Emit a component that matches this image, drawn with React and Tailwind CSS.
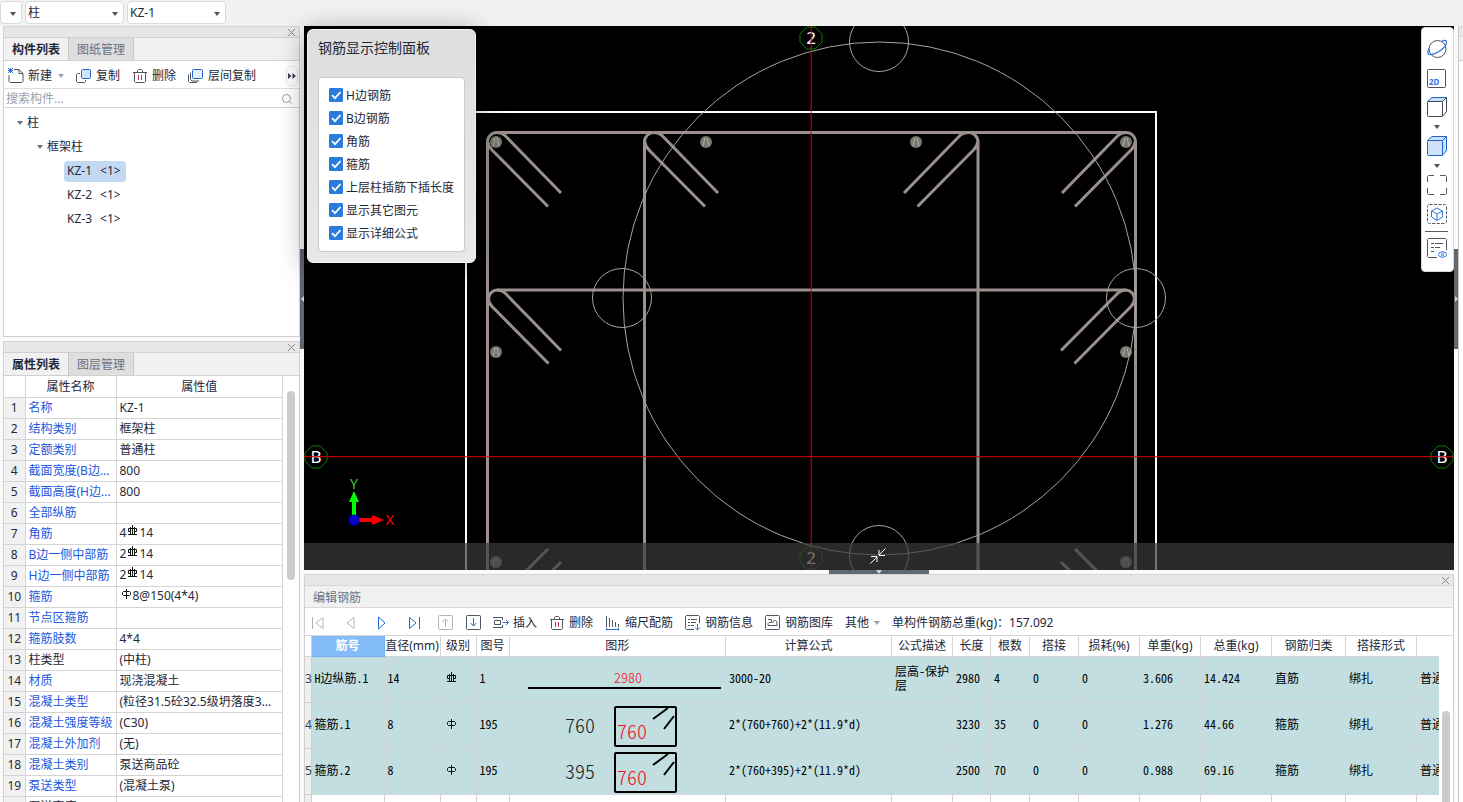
import { useState } from 'react';

const properties = [
  { name: '名称', value: 'KZ-1' },
  { name: '结构类别', value: '框架柱' },
  { name: '定额类别', value: '普通柱' },
  { name: '截面宽度(B边...', value: '800' },
  { name: '截面高度(H边...', value: '800' },
  { name: '全部纵筋', value: '' },
  { name: '角筋', value: '14', count: '4', grade: 3 },
  { name: 'B边一侧中部筋', value: '14', count: '2', grade: 3 },
  { name: 'H边一侧中部筋', value: '14', count: '2', grade: 3 },
  { name: '箍筋', value: '8@150(4*4)', count: '', grade: 1 },
  { name: '节点区箍筋', value: '' },
  { name: '箍筋肢数', value: '4*4' },
  { name: '柱类型', value: '(中柱)', plain: true },
  { name: '材质', value: '现浇混凝土' },
  { name: '混凝土类型', value: '(粒径31.5砼32.5级坍落度3...' },
  { name: '混凝土强度等级', value: '(C30)' },
  { name: '混凝土外加剂', value: '(无)' },
  { name: '混凝土类别', value: '泵送商品砼' },
  { name: '泵送类型', value: '(混凝土泵)' },
  { name: '泵送高度(m)', value: '', plain: true },
];

const displayOptions = ['H边钢筋', 'B边钢筋', '角筋', '箍筋', '上层柱插筋下插长度', '显示其它图元', '显示详细公式'];

const columns = [
  { title: '筋号', width: 'w-[73px]' },
  { title: '直径(mm)', width: 'w-[56px]' },
  { title: '级别', width: 'w-[36px]' },
  { title: '图号', width: 'w-[33px]' },
  { title: '图形', width: '' },
  { title: '计算公式', width: 'w-[166px]' },
  { title: '公式描述', width: 'w-[61px]' },
  { title: '长度', width: 'w-[38px]' },
  { title: '根数', width: 'w-[39px]' },
  { title: '搭接', width: 'w-[49px]' },
  { title: '损耗(%)', width: 'w-[61px]' },
  { title: '单重(kg)', width: 'w-[61px]' },
  { title: '总重(kg)', width: 'w-[71px]' },
  { title: '钢筋归类', width: 'w-[74px]' },
  { title: '搭接形式', width: 'w-[71px]' },
  { title: '', width: 'w-[71px]' },
];

const bars = [
  { no: 3, name: 'H边纵筋.1', dia: 14, grade: 3, fig: 1, shape: ['2980'], formula: '3000-20', note: '层高-保护层', rest: ['2980', '4', '0', '0', '3.606', '14.424', '直筋', '绑扎', '普通钢筋'] },
  { no: 4, name: '箍筋.1', dia: 8, grade: 1, fig: 195, shape: ['760', '760'], formula: '2*(760+760)+2*(11.9*d)', note: '', rest: ['3230', '35', '0', '0', '1.276', '44.66', '箍筋', '绑扎', '普通钢筋'] },
  { no: 5, name: '箍筋.2', dia: 8, grade: 1, fig: 195, shape: ['395', '760'], formula: '2*(760+395)+2*(11.9*d)', note: '', rest: ['2500', '70', '0', '0', '0.988', '69.16', '箍筋', '绑扎', '普通钢筋'] },
];

function Svg({ size = 16, className = '', children }) {
  return (
    <svg width={size} height={size} viewBox={`0 0 ${size} ${size}`} fill="none" stroke="#4b5563" className={`shrink-0 ${className}`} aria-hidden="true">
      {children}
    </svg>
  );
}

function Caret({ className = 'fill-gray-600' }) {
  return (
    <svg width="6" height="4" viewBox="0 0 6 4" className={`shrink-0 ${className}`} aria-hidden="true">
      <path d="M0 0h6L3 4z" />
    </svg>
  );
}

// Rebar grade marks: 1 = HPB300, 3 = HRB400
function Grade({ grade, className = '' }) {
  return (
    <svg width="11" height="11" viewBox="0 0 11 11" fill="none" stroke="#111" className={className} role="img" aria-label={grade === 3 ? 'HRB400' : 'HPB300'}>
      {grade === 3 ? (
        <path d="M3.500 6.500H1.500v-3h8v3H7.500M5.500 0v9M3.500 2v7M7.500 2v7M1 9.500h9" />
      ) : (
        <path d="M2.500 3.500h6l1 1v2l-1 1h-6l-1-1v-2zM5.500 1v10" />
      )}
    </svg>
  );
}

const TrashIcon = () => (
  <Svg>
    <path d="M1 4.500h14M5.500 4V2.500l1-1h3l1 1V4M2.500 5v8.500l1 1h9l1-1V5" />
    <path d="M6.500 7v5M9.500 7v5" stroke="#c0304a" />
  </Svg>
);

const NewIcon = () => (
  <Svg>
    <path d="M6 1.500h5l4 4v8l-1 1H2l-1-1V7M11 1.500v4h4" />
    <path d="M0 0l5 5M5 0L0 5M2.500 0v5M0 2.500h5" stroke="#2f6fe0" />
  </Svg>
);

const CopyIcon = () => (
  <Svg>
    <path d="M4 5.500H1.500l-1 1v7l1 1h7l1-1V12" />
    <rect x="5.500" y="1.500" width="9" height="9" rx="1" fill="#cfe3fb" stroke="#2467d1" />
  </Svg>
);

const LayerCopyIcon = () => (
  <Svg>
    <path d="M2.500 4.500v7l1.500 1.500h7M.5 6.500v7l1 1H9" />
    <rect x="4.500" y="1.500" width="10" height="9" rx="1" fill="#e3f0fd" stroke="#2467d1" />
  </Svg>
);

const InsertIcon = () => (
  <Svg>
    <path d="M0 2.500h9.500V5M0 12.500h9.500V10M1.500 5.500h6v4h-6z" />
    <path d="M9.500 7.500h6M13 5l2.500 2.500L13 10" stroke="#2f6fe0" />
  </Svg>
);

const ScaleIcon = () => (
  <Svg>
    <path d="M1.500 1v11M4.500 3v9M7.500 5v7M10.500 7v5M13.500 9v3" />
    <path d="M1 14.500h13M1.500 13v2.500M13.500 13v2.500" stroke="#2f6fe0" />
  </Svg>
);

const InfoIcon = () => (
  <Svg>
    <path d="M9 14.500H1.500l-1-1v-12l1-1h12l1 1V8M3 4.500h2M6 4.500h6M3 7.500h2M6 7.500h5M3 10.500h2M6 10.500h3" />
    <path d="M12.500 9v6M10 12.500l2.500 2.500 2.500-2.500" stroke="#2f6fe0" />
  </Svg>
);

const LibraryIcon = () => (
  <Svg>
    <rect x=".5" y=".5" width="14" height="14" rx="1" />
    <path d="M3 4.500h3.500v3H4L3 8.500v2h9V7l-1.500-1.500H9l-1 1v1.500" />
  </Svg>
);

function ToolButton({ icon, children }) {
  return (
    <button type="button" className="flex shrink-0 items-center gap-1 whitespace-nowrap">
      {icon}
      {children}
    </button>
  );
}

function CloseButton() {
  return (
    <button type="button" aria-label="关闭" className="flex h-full w-4 items-center justify-center">
      <svg width="7" height="7" viewBox="0 0 7 7" stroke="#8a8a8a" aria-hidden="true">
        <path d="M0 0l7 7M7 0L0 7" />
      </svg>
    </button>
  );
}

function PanelStrip() {
  return (
    <div className="flex h-[11px] shrink-0 justify-end border-t border-[#d6d6d6] bg-[#e7e7e7]">
      <CloseButton />
    </div>
  );
}

function Tabs({ items }) {
  const [active, setActive] = useState(0);
  return (
    <div role="tablist" className="flex h-6 shrink-0 border-y border-[#d0d0d0] bg-[#f1f1f1]">
      {items.map((item, i) => (
        <button
          key={item}
          type="button"
          role="tab"
          aria-selected={i === active}
          onClick={() => setActive(i)}
          className={
            i === active
              ? 'border-r border-[#c8c8c8] px-2 pt-[2px] font-bold text-gray-800'
              : 'border-r border-[#c8c8c8] bg-[#dedede] px-2 pt-[2px] text-gray-500'
          }
        >
          {item}
        </button>
      ))}
    </div>
  );
}

function TopSelect({ label, value, className }) {
  return (
    <div className={`relative ${className}`}>
      <select aria-label={label} defaultValue={value} className="h-[23px] w-full appearance-none rounded-sm border border-[#dadada] bg-white px-[2px] text-xs text-gray-800">
        <option>{value}</option>
      </select>
      <span className="pointer-events-none absolute inset-y-0 right-[6px] flex items-center">
        <Caret />
      </span>
    </div>
  );
}

function TopBar() {
  return (
    <header className="flex h-[26px] shrink-0 gap-[3px] bg-[#f1f1f1] pt-px">
      <TopSelect label="楼层" value="" className="w-[22px]" />
      <TopSelect label="构件类型" value="柱" className="w-[99px]" />
      <TopSelect label="构件" value="KZ-1" className="w-[99px]" />
    </header>
  );
}

function ComponentPanel() {
  const [selected, setSelected] = useState('KZ-1');
  return (
    <section className="flex h-[311px] shrink-0 flex-col border-x border-b border-[#d0d0d0] bg-white">
      <PanelStrip />
      <Tabs items={['构件列表', '图纸管理']} />
      <div className="flex h-7 shrink-0 items-center gap-3 border-b border-[#dcdcdc] pt-[2px] pl-1">
        <button type="button" className="flex items-center gap-1">
          <NewIcon />
          新建
          <Caret className="ml-[2px] fill-gray-400" />
        </button>
        <ToolButton icon={<CopyIcon />}>复制</ToolButton>
        <ToolButton icon={<TrashIcon />}>删除</ToolButton>
        <ToolButton icon={<LayerCopyIcon />}>层间复制</ToolButton>
        <button type="button" aria-label="更多" className="mr-px ml-auto flex h-5 items-center rounded-sm border border-[#ececec] px-px">
          <svg width="8" height="6" viewBox="0 0 8 6" className="fill-gray-700" aria-hidden="true">
            <path d="M0 0l3.500 3L0 6zM4.500 0L8 3 4.500 6z" />
          </svg>
        </button>
      </div>
      <label className="flex h-[19px] shrink-0 items-center border-b border-[#d6d6d6] pt-px pr-[6px] pl-[2px]">
        <input type="text" placeholder="搜索构件..." aria-label="搜索构件" className="min-w-0 flex-1 placeholder-gray-400 outline-none" />
        <Svg size={12}>
          <circle cx="5.500" cy="5.500" r="4" stroke="#9a9a9a" />
          <path d="M8.500 8.500l2 2" stroke="#9a9a9a" />
        </Svg>
      </label>
      <div className="pt-[3px]">
        <div className="flex h-6 items-center gap-1 pl-[13px]">
          <Caret className="fill-gray-500" />柱
        </div>
        <div className="flex h-6 items-center gap-1 pl-[33px]">
          <Caret className="fill-gray-500" />框架柱
        </div>
        {['KZ-1', 'KZ-2', 'KZ-3'].map((name) => (
          <div key={name} className="flex h-6 items-center pl-[60px]">
            <button
              type="button"
              onClick={() => setSelected(name)}
              className={
                selected === name
                  ? 'flex h-[21px] items-center gap-2 rounded-sm bg-[#c2d9f1] pr-[5px] pl-[3px]'
                  : 'flex h-[21px] items-center gap-2 pr-[5px] pl-[3px]'
              }
            >
              <span>{name}</span>
              <span>&lt;1&gt;</span>
            </button>
          </div>
        ))}
      </div>
    </section>
  );
}

function PropertyPanel() {
  return (
    <section className="mt-1 flex min-h-0 flex-1 flex-col overflow-hidden border-x border-[#d0d0d0] bg-white">
      <PanelStrip />
      <Tabs items={['属性列表', '图层管理']} />
      <div className="flex min-h-0 flex-1">
        <div className="min-w-0 flex-1">
          <table className="w-full table-fixed border-collapse">
            <thead>
              <tr className="h-[21px]">
                <th className="w-[21px] border-r border-b border-[#d4d4d4]"></th>
                <th className="w-[91px] border-r border-b border-[#d4d4d4] pt-px font-normal">属性名称</th>
                <th className="border-r border-b border-[#d4d4d4] pt-px font-normal">属性值</th>
              </tr>
            </thead>
            <tbody>
              {properties.map((p, i) => (
                <tr key={p.name} className="h-[21px]">
                  <td className="border-r border-b border-[#d4d4d4] bg-[#f1f1f1] text-center">{i + 1}</td>
                  <td className={p.plain ? 'truncate border-r border-b border-[#d4d4d4] pl-[3px]' : 'truncate border-r border-b border-[#d4d4d4] pl-[3px] text-[#2257e0]'}>
                    {p.name}
                  </td>
                  <td className="truncate border-r border-b border-[#d4d4d4] pl-[3px]">
                    {p.count}
                    {p.grade && <Grade grade={p.grade} className="mx-px mb-[6px] inline-block" />}
                    {p.value}
                  </td>
                </tr>
              ))}
            </tbody>
          </table>
        </div>
        <div className="w-4 shrink-0 px-1 pt-[15px]">
          <div className="h-[189px] rounded-full bg-[#cbcbcb]" />
        </div>
      </div>
    </section>
  );
}

function SplitHandle({ dir }) {
  return (
    <div className="w-1 shrink-0 pt-[223px]">
      <div className="flex h-[100px] items-center justify-center bg-[#5f6772]">
        <svg width="3" height="6" viewBox="0 0 3 6" className="fill-gray-300" aria-hidden="true">
          <path d={dir === 'left' ? 'M3 0v6L0 3z' : 'M0 0v6l3-3z'} />
        </svg>
      </div>
    </div>
  );
}

function DisplayPanel() {
  return (
    <div className="absolute top-[3px] left-[3px] z-10 w-[169px] rounded-md border border-[#f4f4f4] bg-linear-to-b from-[#dedede] to-[#e8e8e8] px-[10px] pb-[10px] text-gray-800 shadow-[0_4px_28px_rgba(0,0,0,0.4)]">
      <h2 className="flex h-[47px] pt-[8px] text-sm leading-5">钢筋显示控制面板</h2>
      <div className="rounded-sm border border-[#c9c9c9] bg-white px-[10px] pt-[5px] pb-[7px]">
        {displayOptions.map((option) => (
          <label key={option} className="grid h-[23px] grid-cols-[14px_1fr] items-center gap-[3px] whitespace-nowrap">
            <input type="checkbox" defaultChecked className="peer col-start-1 row-start-1 size-[14px] appearance-none rounded-[1px] border border-gray-400 checked:border-[#2a7bdc] checked:bg-[#2a7bdc]" />
            <svg viewBox="0 0 14 14" className="pointer-events-none invisible col-start-1 row-start-1 size-[14px] peer-checked:visible" fill="none" stroke="#fff" strokeWidth="1.8" aria-hidden="true">
              <path d="M3 7.200l3 3 5.500-6.200" />
            </svg>
            <span className="row-start-1 pt-[2px]">{option}</span>
          </label>
        ))}
      </div>
    </div>
  );
}

function Cube({ active }) {
  const line = active ? '#2563c9' : '#3f4654';
  return (
    <Svg size={20}>
      <path d="M.5 4.500L5 .5h14.500L15.500 4.500z" fill="#c9e0fb" stroke="#2563c9" />
      <path d="M15.500 4.500l4-4v14l-4 5z" fill={active ? '#c9e0fb' : '#fff'} stroke={line} />
      <rect x=".5" y="4.500" width="15" height="15" rx="1" fill={active ? '#cfe2fa' : '#fff'} stroke={line} />
    </Svg>
  );
}

function ViewToolbar() {
  return (
    <div className="absolute top-px right-0 z-10 flex w-[33px] flex-col items-center gap-[9px] rounded-sm border border-[#d8d8d8] bg-white pt-[11px] pr-[2px] pb-[13px]">
      <button type="button" aria-label="动态观察">
        <Svg size={20}>
          <circle cx="10.500" cy="10" r="8.500" />
          <path d="M14.500 2.500c2.500-1.500 4.500-1.500 5 0 .8 2.500-2.500 7-7.500 10-5 3-10 4-11 2-.8-1.500 0-3 1-5" stroke="#2f74e0" strokeWidth="1.200" />
        </Svg>
      </button>
      <button type="button" aria-label="二维视图">
        <Svg size={20}>
          <rect x=".5" y="1.500" width="18" height="18" rx="1" />
          <text x="2" y="17" fill="#2f74e0" stroke="none" fontSize="8" fontWeight="700">2D</text>
        </Svg>
      </button>
      <div className="flex flex-col items-center">
        <button type="button" aria-label="视图方向"><Cube /></button>
        <div className="flex h-[19px] items-center"><Caret /></div>
        <button type="button" aria-label="显示样式"><Cube active /></button>
        <div className="flex h-[19px] items-center"><Caret /></div>
        <button type="button" aria-label="全屏">
          <Svg size={20}>
            <path d="M7 .5H1.500l-1 1V7M13 .5h5.500l1 1V7M7 19.500H1.500l-1-1V13M13 19.500h5.500l1-1V13" />
          </Svg>
        </button>
      </div>
      <button type="button" aria-label="局部三维">
        <Svg size={20}>
          <rect x=".5" y=".5" width="19" height="19" rx="2" strokeDasharray="3 1.500" />
          <path d="M10 4l5.500 3v6L10 16.500 4.500 13V7zM4.500 7l5.500 3 5.500-3M10 10v6.500" stroke="#2f74e0" />
        </Svg>
      </button>
      <div className="-mt-[2px] h-px w-[23px] bg-[#5a5a50]" />
      <button type="button" aria-label="显示设置" className="-mt-[3px]">
        <Svg size={20}>
          <path d="M10 19.500H1.500l-1-1v-17l1-1h17l1 1V12M4 5.500h3M8 5.500h8M4 9.500h3M8 9.500h5M4 13.500h3" />
          <ellipse cx="15.500" cy="16.500" rx="4" ry="2.800" stroke="#2f74e0" />
          <circle cx="15.500" cy="16.500" r="1.200" stroke="#2f74e0" />
        </Svg>
      </button>
    </div>
  );
}

const rebars = [[496, 142], [706, 142], [916, 142], [1126, 142], [496, 352], [1126, 352], [496, 562], [1126, 562]];

const circles = [[879, 42], [622, 298], [1136, 298], [879, 555]];

function AxisMark({ x, y, children }) {
  return (
    <g>
      <path d={`M${x - 4} ${y - 11}h8l7 7v8l-7 7h-8l-7-7v-8z`} stroke="#0a7a0a" />
      <text x={x} y={y + 6} textAnchor="middle" fill="#fff" stroke="none" fontSize="17">{children}</text>
    </g>
  );
}

function Drawing() {
  return (
    <svg viewBox="304 26 1150 544" preserveAspectRatio="xMidYMid slice" className="absolute inset-0 size-full font-['Noto_Sans',sans-serif]" fill="none" role="img" aria-label="柱截面配筋图">
      <path d="M466 580V112H1156V580" stroke="#fff" strokeWidth="2" />
      <g stroke="#9b908d" strokeWidth="3">
        <path d="M487.500 580V142a9.500 9.500 0 0 1 9.500-9.500h629a9.500 9.500 0 0 1 9.500 9.500V580" />
        <path d="M644.500 580V142a9.500 9.500 0 0 1 9.500-9.500h314a9.500 9.500 0 0 1 10 9.500V580" />
        <path d="M488.500 303v-4a9 9 0 0 1 9-9h628a9 9 0 0 1 9 9v4" />
        <path d="M497 132.500q5 0 8 3l56 57.500M488 142q0 4 4 8l56 56.500" />
        <path d="M654 132.500q5 0 8 3l56 57.500M645 142q0 4 4 8l56 56.500" />
        <path d="M968 132.500q-5 0-8 3L904 193M977.500 142q0 4-4 8l-56 56.500" />
        <path d="M1126 132.500q-5 0-8 3L1062 193M1135 142q0 4-4 8l-56 56.500" />
        <path d="M497 290q5 0 8 3l56 57.500M488.500 299q0 4 4 8l56 56.500" />
        <path d="M1126 290q-5 0-8 3l-57 57.500M1134.500 299q0 4-4 8l-56 56.500" />
        <path d="M548 549l-30 30M561 562l-14 14M1075 549l30 30M1061 562l14 14" />
      </g>
      {rebars.map(([x, y]) => (
        <g key={`${x}-${y}`}>
          <circle cx={x} cy={y} r="6" fill="#77786f" />
          <path d={`M${x - 3} ${y + 4}l2-8M${x + 3} ${y + 4}l-2-8`} stroke="#b0b0a8" />
        </g>
      ))}
      <g stroke="#a5a5a5">
        <circle cx="879.500" cy="298.500" r="256.500" />
        {circles.map(([x, y]) => (
          <circle key={`${x}-${y}`} cx={x} cy={y} r="29.500" />
        ))}
      </g>
      <AxisMark x={811} y={38}>2</AxisMark>
      <AxisMark x={811} y={558}>2</AxisMark>
      <AxisMark x={316} y={457}>B</AxisMark>
      <AxisMark x={1442} y={457}>B</AxisMark>
      <line x1="304" y1="456.700" x2="1454" y2="456.700" stroke="#d80008" />
      <line x1="811.200" y1="26" x2="811.200" y2="570" stroke="#d80008" />
      <path d="M354 520V500" stroke="#0f0" strokeWidth="4" />
      <path d="M354 491l-5 11h10z" fill="#0f0" />
      <path d="M356 520h18" stroke="#f00" strokeWidth="4" />
      <path d="M384 520l-12-5v10z" fill="#f00" />
      <circle cx="354" cy="520" r="5.500" fill="#0000c8" />
      <text x="354" y="489" textAnchor="middle" fill="#3c3" fontSize="14">Y</text>
      <text x="390" y="525" textAnchor="middle" fill="#f00" fontSize="15">X</text>
    </svg>
  );
}

function Viewport() {
  return (
    <main className="relative min-h-0 flex-1 bg-black">
      <Drawing />
      <div className="absolute inset-x-0 bottom-0 flex h-[27px] items-center justify-center bg-[#3a3a3a]/70 pr-[3px] pb-[2px]">
        <button type="button" aria-label="收起">
          <svg width="16" height="16" viewBox="0 0 16 16" fill="none" stroke="#fff" aria-hidden="true">
            <path d="M15.500.5L9 7M9 2v5.500h6M.5 15.500L7 9M1 8.500h6V14" />
          </svg>
        </button>
      </div>
      <DisplayPanel />
      <ViewToolbar />
    </main>
  );
}

function BarShape({ shape }) {
  const style = "mx-auto block h-[45px] w-[216px] font-['Noto_Sans_CJK_SC',monospace] font-light [font-feature-settings:'hwid']";
  if (shape.length === 1) {
    return (
      <svg viewBox="0 0 216 45" className={style}>
        <text x="118" y="26" textAnchor="middle" fontSize="14" fill="#f01020">{shape[0]}</text>
        <path d="M18 31h193" stroke="#000" strokeWidth="2" />
      </svg>
    );
  }
  return (
    <svg viewBox="0 0 216 45" className={style}>
      <text x="55" y="30" fontSize="20" fill="#222">{shape[0]}</text>
      <rect x="105" y="4" width="61" height="39" rx="1" fill="none" stroke="#000" strokeWidth="2" />
      <text x="107" y="36" fontSize="20" fill="#f01020">{shape[1]}</text>
      <path d="M143 16l15-11M154 26l10-13" stroke="#000" strokeWidth="2" />
    </svg>
  );
}

const cell = 'overflow-hidden border-r border-b border-[#d0d8da] bg-[#c2dee0] pb-[3px] pl-[3px] leading-[14px]';

function BarTable() {
  return (
    <table className="w-full min-w-[1183px] table-fixed border-collapse">
      <thead>
        <tr className="h-5">
          <th className="w-[6px] border-r border-b border-[#d4d4d4] p-0"></th>
          {columns.map((c, i) => (
            <th
              key={c.title}
              className={
                i === 0
                  ? 'w-[73px] border-r border-b border-[#6fb0f5] bg-[#84bcf9] p-0 pt-px font-bold whitespace-nowrap text-white'
                  : `border-r border-b border-[#d4d4d4] p-0 pt-px font-normal whitespace-nowrap ${c.width}`
              }
            >
              {c.title}
            </th>
          ))}
        </tr>
      </thead>
      <tbody className="font-['Noto_Sans_CJK_SC',monospace] text-black [font-feature-settings:'hwid']">
        {bars.map((b) => (
          <tr key={b.no} className="h-[46px]">
            <td className="border-r border-b border-[#cfcfcf] bg-[#efefef] p-0 text-center font-['Noto_Sans',sans-serif] text-gray-700 [font-feature-settings:normal]">{b.no}</td>
            <td className={`${cell} whitespace-nowrap`}>{b.name}</td>
            <td className={cell}>{b.dia}</td>
            <td className={`${cell} text-center`}>
              <Grade grade={b.grade} className="ml-[2px]" />
            </td>
            <td className={cell}>{b.fig}</td>
            <td className="border-r border-b border-[#d0d8da] bg-[#c2dee0] p-0">
              <BarShape shape={b.shape} />
            </td>
            <td className={cell}>{b.formula}</td>
            <td className={cell}>{b.note}</td>
            {b.rest.map((text, i) => (
              <td key={i} className={`${cell} whitespace-nowrap`}>{text}</td>
            ))}
          </tr>
        ))}
        <tr className="h-[46px]">
          <td className="border-r border-b border-[#cfcfcf] bg-[#efefef]"></td>
          {columns.map((c) => (
            <td key={c.title} className="border-r border-[#d4d4d4]"></td>
          ))}
        </tr>
      </tbody>
    </table>
  );
}

const navIcons = [
  { label: '第一个', color: '#b4b4b4', d: 'M2.500 2v12M13 2.500v11L6 8z' },
  { label: '上一个', color: '#b4b4b4', d: 'M12 2.500v11L5 8z' },
  { label: '下一个', color: '#2467d1', d: 'M4.500 2v12L11 8z' },
  { label: '最后一个', color: '#2467d1', d: 'M3.500 2.500v11L10 8zM13.500 2v12' },
];

function RebarEditor() {
  return (
    <section className="flex h-[228px] shrink-0 flex-col overflow-hidden border-x border-[#d0d0d0] bg-white">
      <div className="flex h-3 shrink-0 justify-end border-y border-[#d6d6d6] bg-[#e7e7e7]">
        <CloseButton />
      </div>
      <h2 className="flex h-[22px] shrink-0 items-center border-b border-[#d9d9d9] bg-[#f1f1f1] pt-[2px] pl-2 text-gray-500">编辑钢筋</h2>
      <div className="flex h-7 shrink-0 items-center border-b border-[#d4d4d4] pt-[2px] pl-[3px]">
        <div className="flex gap-3">
          {navIcons.map((n) => (
            <button key={n.label} type="button" aria-label={n.label} className="flex w-5 justify-center">
              <Svg>
                <path d={n.d} stroke={n.color} />
              </Svg>
            </button>
          ))}
        </div>
        <div className="ml-3 flex gap-2">
          <button type="button" aria-label="上移" className="flex w-5 justify-center">
            <Svg>
              <rect x=".5" y=".5" width="14" height="14" rx="1" stroke="#b4b4b4" />
              <path d="M7.500 12V4M4.500 7l3-3 3 3" stroke="#b4b4b4" />
            </Svg>
          </button>
          <button type="button" aria-label="下移" className="flex w-5 justify-center">
            <Svg>
              <rect x=".5" y=".5" width="14" height="14" rx="1" />
              <path d="M7.500 3v8M4.500 8l3 3 3-3" stroke="#2467d1" />
            </Svg>
          </button>
        </div>
        <div className="ml-[9px] flex items-center gap-3">
          <ToolButton icon={<InsertIcon />}>插入</ToolButton>
          <ToolButton icon={<TrashIcon />}>删除</ToolButton>
          <ToolButton icon={<ScaleIcon />}>缩尺配筋</ToolButton>
          <ToolButton icon={<InfoIcon />}>钢筋信息</ToolButton>
          <ToolButton icon={<LibraryIcon />}>钢筋图库</ToolButton>
          <button type="button" className="flex items-center gap-1 whitespace-nowrap">
            其他
            <Caret className="ml-px fill-gray-400" />
          </button>
          <span className="whitespace-nowrap">单构件钢筋总重(kg)：157.092</span>
        </div>
      </div>
      <div className="flex min-h-0 flex-1">
        <div className="min-w-0 flex-1 overflow-hidden">
          <BarTable />
        </div>
        <div className="w-[14px] shrink-0 px-[3px] pt-[75px]">
          <div className="h-full rounded-t-full bg-[#cbcbcb]" />
        </div>
      </div>
    </section>
  );
}

export default function App() {
  return (
    <div className="flex h-screen flex-col overflow-hidden bg-[#fafafa] font-['Noto_Sans','Noto_Sans_CJK_SC',sans-serif] text-xs text-gray-800">
      <TopBar />
      <div className="flex min-h-0 flex-1">
        <aside className="flex w-[300px] shrink-0 flex-col pl-[3px]">
          <ComponentPanel />
          <PropertyPanel />
        </aside>
        <SplitHandle dir="left" />
        <div className="flex min-w-0 flex-1 flex-col">
          <Viewport />
          <div className="flex h-1 shrink-0 justify-center">
            <div className="flex w-[100px] justify-center bg-[#5f6772]">
              <Caret className="fill-gray-300" />
            </div>
          </div>
          <RebarEditor />
        </div>
        <SplitHandle dir="right" />
        <aside className="w-[5px] shrink-0 border-l border-[#c8c8c8] bg-white">
          <div className="h-[11px] border-y border-[#d6d6d6] bg-[#e7e7e7]" />
          <div className="h-6 border-b border-[#d0d0d0] bg-[#f1f1f1]" />
        </aside>
      </div>
    </div>
  );
}
